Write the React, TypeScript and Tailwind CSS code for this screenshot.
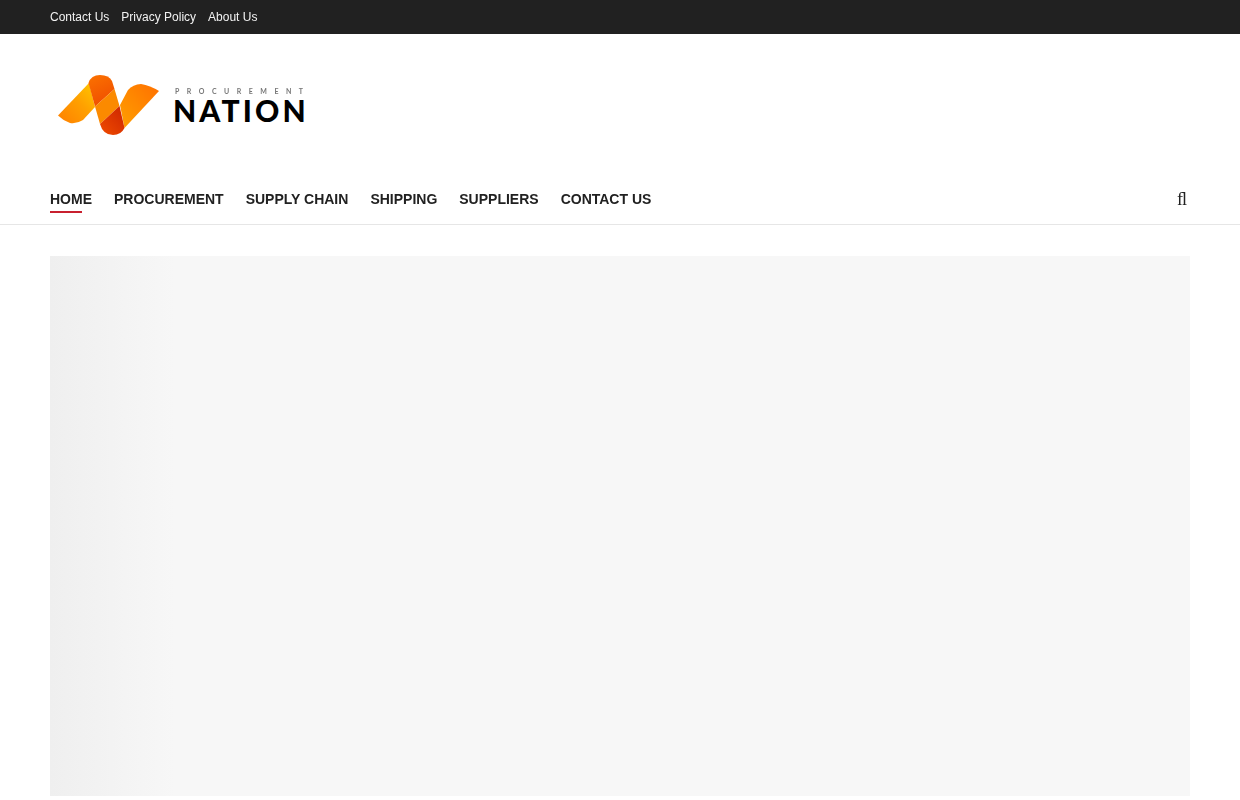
const topLinks = ['Contact Us', 'Privacy Policy', 'About Us'];
const navLinks = ['HOME', 'PROCUREMENT', 'SUPPLY CHAIN', 'SHIPPING', 'SUPPLIERS', 'CONTACT US'];

const LogoMark = () => (
  <svg width="104" height="62" viewBox="56 73 104 62" className="block">
    <defs>
      <linearGradient id="left" x1="0" y1="1" x2="1" y2="0">
        <stop offset="0" stopColor="#ff7f00" />
        <stop offset="0.55" stopColor="#ffa000" />
        <stop offset="1" stopColor="#ffc800" />
      </linearGradient>
      <linearGradient id="top" x1="0.2" y1="0" x2="0.6" y2="1">
        <stop offset="0" stopColor="#fb7000" />
        <stop offset="1" stopColor="#ef4d00" />
      </linearGradient>
      <linearGradient id="bottom" x1="1" y1="0" x2="0" y2="1">
        <stop offset="0" stopColor="#cc2400" />
        <stop offset="1" stopColor="#f04c00" />
      </linearGradient>
      <linearGradient id="right" x1="0" y1="1" x2="1" y2="0">
        <stop offset="0" stopColor="#ffa000" />
        <stop offset="1" stopColor="#ff7000" />
      </linearGradient>
    </defs>
    <path d="M58 114.500 L89 82 L95 106 L83 119 Q77 123 70 122 Q63 119.500 58 114.500 Z" fill="url(#left)" />
    <path d="M120 104 L128 89 Q133 83.500 141 83 Q150 84.500 159 90 L124.500 127 Z" fill="url(#right)" />
    <path d="M88.500 82 Q91 74 100 74 Q109 74 112 80 L114.500 88 L95 105.500 Z" fill="url(#top)" />
    <path d="M95 105.500 L114.500 88 L119.500 105 L100 123 Z" fill="#fb8a00" />
    <path d="M100 123 L119.500 105 L124.500 127 Q121 134 113 134 Q103 134 100 123 Z" fill="url(#bottom)" />
  </svg>
);

const App = () => {
  return (
    <div className="min-h-[800px] bg-white font-['Liberation_Sans',Arial,sans-serif]">
      {/* Top bar */}
      <div className="flex h-[34px] items-center bg-[#212121] px-[50px]">
        <div className="flex gap-3 will-change-transform">
          {topLinks.map((link) => (
            <a key={link} href="#" className="text-xs text-[#f2f2f2]">
              {link}
            </a>
          ))}
        </div>
      </div>

      {/* Logo */}
      <div className="flex h-[142px] px-[50px] pt-[40px]">
        <div className="ml-[6px]">
          <LogoMark />
        </div>
        <div className="ml-[13px] mt-[13px] flex flex-col font-['Lato',sans-serif]">
          <span className="ml-[2px] text-[7px] leading-[8px] font-bold tracking-[7.500px] whitespace-nowrap text-[#777777] will-change-transform">
            PROCUREMENT
          </span>
          <span className="text-[30px] leading-[30px] font-black tracking-[0.105em] text-black">NATION</span>
        </div>
      </div>

      {/* Nav */}
      <div className="flex h-[49px] items-start justify-between border-b border-[#e6e6e6] px-[50px]">
        <nav className="flex gap-[22px] pt-[14px] will-change-transform">
          {navLinks.map((link, i) => (
            <a key={link} href="#" className="relative text-sm leading-[18px] font-bold text-[#212121]">
              {link}
              {i === 0 && <span className="absolute top-[21px] left-0 h-[2px] w-[32px] bg-[#c8202f]" />}
            </a>
          ))}
        </nav>
        <span className="mt-[13px] mr-[3px] font-['Liberation_Serif',serif] text-lg leading-[20px] text-[#212121] will-change-transform">
          {'\uFB02'}
        </span>
      </div>

      {/* Placeholder */}
      <div className="px-[50px] pt-[31px]">
        <div className="h-[540px] bg-[linear-gradient(90deg,#efefef_0px,#f2f2f2_48px,#f4f4f4_75px,#f7f7f7_125px)]" />
      </div>
    </div>
  );
};

export default App;
